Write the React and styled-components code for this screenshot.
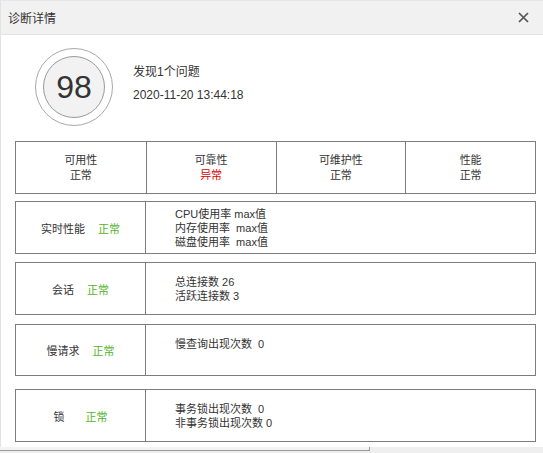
import React from "react";
import styled, { createGlobalStyle } from "styled-components";

const GlobalStyle = createGlobalStyle`
  html, body {
    margin: 0;
    padding: 0;
    background: #e9e9e9;
  }
  body {
    font-family: "Liberation Sans", "Noto Sans CJK SC", sans-serif;
    color: #333;
  }
`;

const Dialog = styled.div`
  width: 543px;
  height: 447px;
  background: #fff;
  border-top: 1px solid #e6e6e6;
  border-left: 1px solid #e2e2e2;
  box-sizing: border-box;
  overflow: hidden;
`;

const Header = styled.header`
  display: flex;
  align-items: center;
  justify-content: space-between;
  height: 33px;
  padding: 0 13px 0 7px;
  background: #f1f1f1;
  border-bottom: 1px solid #e3e3e3;
`;

const Title = styled.h1`
  margin: 0;
  font-size: 12px;
  font-weight: normal;
  color: #333;
`;

const CloseButton = styled.button`
  display: flex;
  align-items: center;
  justify-content: center;
  width: 14px;
  height: 14px;
  padding: 0;
  border: none;
  background: transparent;
  cursor: pointer;
`;

const Body = styled.div`
  padding: 13px 7px 0 14px;
`;

const Summary = styled.div`
  display: flex;
  align-items: center;
  gap: 20px;
  padding-left: 20px;
`;

const ScoreRing = styled.div`
  display: flex;
  align-items: center;
  justify-content: center;
  width: 78px;
  height: 78px;
  border-radius: 50%;
  border: 1px solid #a8a8a8;
  box-sizing: border-box;
`;

const Score = styled.div`
  display: flex;
  align-items: center;
  justify-content: center;
  width: 62px;
  height: 62px;
  border-radius: 50%;
  border: 1px solid #9a9a9a;
  background: #f2f2f2;
  box-sizing: border-box;
  font-size: 32px;
  color: #333;
`;

const SummaryText = styled.div`
  display: flex;
  flex-direction: column;
  gap: 8px;
  font-size: 12px;
  line-height: 15px;
  margin-top: -7px;
`;

const Overview = styled.div`
  display: grid;
  grid-template-columns: repeat(4, 1fr);
  width: 521px;
  height: 53px;
  margin-top: 15px;
  border: 1px solid #7d7d7d;
  box-sizing: border-box;
`;

const OverviewCell = styled.div`
  display: flex;
  flex-direction: column;
  align-items: center;
  justify-content: center;
  font-size: 11px;
  line-height: 15px;
  border-left: ${(p) => (p.first ? "none" : "1px solid #7d7d7d")};
`;

const Status = styled.span`
  color: ${(p) => (p.bad ? "#e00000" : p.green ? "#52b41f" : "#333")};
`;

const Block = styled.div`
  display: grid;
  grid-template-columns: 130px 1fr;
  width: 521px;
  height: ${(p) => p.h || 53}px;
  margin-top: ${(p) => p.gap}px;
  border: 1px solid #7d7d7d;
  box-sizing: border-box;
  font-size: 11px;
`;

const Label = styled.div`
  display: flex;
  align-items: center;
  justify-content: center;
  gap: ${(p) => p.spread || 13}px;
  border-right: 1px solid #7d7d7d;
`;

const Detail = styled.div`
  display: flex;
  flex-direction: column;
  justify-content: ${(p) => (p.top ? "flex-start" : "center")};
  padding: ${(p) => (p.top ? "12px" : "0")} 0 0 29px;
  line-height: 14px;
  white-space: pre;
`;

// page strip under the dialog (a thin scroll track)
const Track = styled.div`
  height: 6px;
  background: #efefef;
`;

const Thumb = styled.div`
  width: 370px;
  height: 4px;
  border-bottom: 1px solid #9a9a9a;
  border-right: 1px solid #9a9a9a;
  box-sizing: border-box;
  background: #f3f3f3;
`;

const blocks = [
  { label: "实时性能", gap: 7, lines: ["CPU使用率 max值", "内存使用率  max值", "磁盘使用率  max值"] },
  { label: "会话", gap: 8, lines: ["总连接数 26", "活跃连接数 3"] },
  { label: "慢请求", gap: 9, h: 52, top: true, lines: ["慢查询出现次数  0"] },
  { label: "锁", gap: 13, spread: 21, lines: ["事务锁出现次数  0", "非事务锁出现次数 0"] },
];

const overview = [
  { name: "可用性", state: "正常" },
  { name: "可靠性", state: "异常", bad: true },
  { name: "可维护性", state: "正常" },
  { name: "性能", state: "正常" },
];

const App = () => {
  return (
    <>
      <GlobalStyle />
      <Dialog>
        <Header>
          <Title>诊断详情</Title>
          <CloseButton aria-label="关闭">
            <svg width="11" height="11" viewBox="0 0 11 11">
              <path d="M1 1L10 10M10 1L1 10" stroke="#555" strokeWidth="1.7" fill="none" />
            </svg>
          </CloseButton>
        </Header>
        <Body>
          <Summary>
            <ScoreRing>
              <Score>98</Score>
            </ScoreRing>
            <SummaryText>
              <div>发现1个问题</div>
              <div>2020-11-20 13:44:18</div>
            </SummaryText>
          </Summary>

          <Overview>
            {overview.map((item, i) => (
              <OverviewCell key={item.name} first={i === 0}>
                <span>{item.name}</span>
                <Status bad={item.bad}>{item.state}</Status>
              </OverviewCell>
            ))}
          </Overview>

          {blocks.map((b) => (
            <Block key={b.label} gap={b.gap} h={b.h}>
              <Label spread={b.spread}>
                <span>{b.label}</span>
                <Status green>正常</Status>
              </Label>
              <Detail top={b.top}>
                {b.lines.map((line) => (
                  <div key={line}>{line}</div>
                ))}
              </Detail>
            </Block>
          ))}
        </Body>
      </Dialog>
      <Track>
        <Thumb />
      </Track>
    </>
  );
};

export default App;
